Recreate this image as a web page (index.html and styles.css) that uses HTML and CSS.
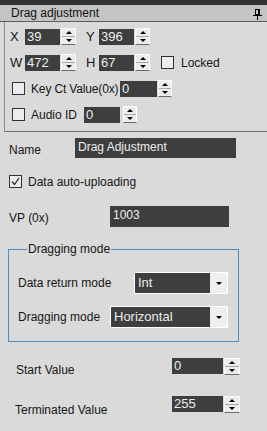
FILE: index.html
```html
<!DOCTYPE html>
<html lang="en">
<head>
    <meta charset="UTF-8">
    <meta name="viewport" content="width=device-width, initial-scale=1.0">
    <title>Drag adjustment</title>
    <link rel="stylesheet" href="styles.css">
</head>
<body>

<div class="topstrip"></div>

<div class="header">
    <span>Drag adjustment</span>
    <svg class="pin" width="9" height="11" viewBox="0 0 9 11">
        <rect x="2.5" y="0.5" width="4" height="5" fill="none" stroke="#000"/>
        <rect x="5" y="0" width="2" height="6" fill="#000"/>
        <line x1="0" y1="6.5" x2="9" y2="6.5" stroke="#000"/>
        <line x1="4.5" y1="7" x2="4.5" y2="11" stroke="#000"/>
    </svg>
</div>

<div class="props">
    <div class="row">
        <span class="lbl-xy">X</span>
        <span class="spin-input w35">39</span>
        <span class="spin-btn"><i class="up"></i><i class="down"></i></span>
        <span class="lbl-xy second">Y</span>
        <span class="spin-input w35">396</span>
        <span class="spin-btn"><i class="up"></i><i class="down"></i></span>
    </div>
    <div class="row">
        <span class="lbl-xy">W</span>
        <span class="spin-input w35">472</span>
        <span class="spin-btn"><i class="up"></i><i class="down"></i></span>
        <span class="lbl-xy second">H</span>
        <span class="spin-input w35">67</span>
        <span class="spin-btn"><i class="up"></i><i class="down"></i></span>
        <span class="check locked"></span>
        <span class="check-text">Locked</span>
    </div>
    <div class="row">
        <span class="check indent"></span>
        <span class="check-text keyct">Key Ct Value(0x)</span>
        <span class="spin-input w37">0</span>
        <span class="spin-btn narrow"><i class="up"></i><i class="down"></i></span>
    </div>
    <div class="row">
        <span class="check indent"></span>
        <span class="check-text audio">Audio ID</span>
        <span class="spin-input w36">0</span>
        <span class="spin-btn narrow gap3"><i class="up"></i><i class="down"></i></span>
    </div>
</div>

<div class="form">
    <div class="name-row">
        <span class="name-label">Name</span>
        <span class="text-box name-box">Drag Adjustment</span>
    </div>

    <div class="auto-row">
        <span class="check checked">
            <svg width="11" height="11" viewBox="0 0 11 11"><polyline points="2,5.5 4.5,8.5 9,2" fill="none" stroke="#222" stroke-width="1.2"/></svg>
        </span>
        <span class="check-text">Data auto-uploading</span>
    </div>

    <div class="vp-row">
        <span class="vp-label">VP (0x)</span>
        <span class="text-box vp-box">1003</span>
    </div>

    <fieldset class="group">
        <legend>Dragging mode</legend>
        <div class="group-row">
            <span class="ret-label">Data return mode</span>
            <span class="combo ret-combo"><span class="combo-value">Int</span><span class="combo-arrow"><i></i></span></span>
        </div>
        <div class="group-row">
            <span class="drag-label">Dragging mode</span>
            <span class="combo drag-combo"><span class="combo-value">Horizontal</span><span class="combo-arrow"><i></i></span></span>
        </div>
    </fieldset>

    <div class="value-row start">
        <span class="value-label">Start Value</span>
        <span class="spin-input w51">0</span>
        <span class="spin-btn wide"><i class="up"></i><i class="down"></i></span>
    </div>
    <div class="value-row end">
        <span class="value-label">Terminated Value</span>
        <span class="spin-input w51">255</span>
        <span class="spin-btn wide"><i class="up"></i><i class="down"></i></span>
    </div>
</div>

</body>
</html>
```

FILE: styles.css
```css
body {
    margin: 0;
    width: 267px;
    height: 431px;
    overflow: hidden;
    background-color: #dadada;
    color: #161616;
    font-family: "Liberation Sans", Arial, sans-serif;
    font-size: 12px;
}

.topstrip {
    height: 5px;
    background-color: #333333;
}

.header {
    display: flex;
    align-items: center;
    justify-content: space-between;
    height: 16px;
    padding: 0 5px 0 11px;
    background-color: #c4c4c4;
    border-bottom: 1px solid #5c5c5c;
    color: #111;
}

.pin {
    display: block;
    margin-top: 2px;
}

/* top property block */
.props {
    margin-left: 4px;
    border-left: 1px solid #8c8c8c;
    border-bottom: 1px solid #707070;
    padding: 6px 0 8px 5px;
    display: flex;
    flex-direction: column;
    gap: 9px;
}

.row {
    display: flex;
    align-items: center;
    height: 17px;
}

.lbl-xy {
    width: 15px;
    font-size: 13px;
}

.lbl-xy.second {
    width: 13px;
    margin-left: 10px;
}

.spin-input {
    box-sizing: border-box;
    height: 16px;
    padding-left: 2px;
    background-color: #3e3e3e;
    color: #eeeeee;
    font-size: 13px;
    line-height: 16px;
}

.w35 { width: 35px; }
.w36 { width: 36px; }
.w37 { width: 37px; }
.w51 { width: 51px; }

.spin-btn {
    box-sizing: border-box;
    display: flex;
    flex-direction: column;
    width: 15px;
    height: 17px;
    margin-left: 1px;
    background-color: #ececec;
    border: 1px solid #fbfbfb;
    border-bottom-color: #6a6a6a;
}

.spin-btn.narrow { width: 14px; }
.spin-btn.gap3 { margin-left: 3px; }
.spin-btn.wide { width: 16px; }

.spin-btn i {
    flex: 1;
    display: flex;
    align-items: center;
    justify-content: center;
}

.spin-btn .up {
    border-bottom: 1px solid #a8a8a8;
}

.spin-btn .up::after {
    content: "";
    border-left: 3px solid transparent;
    border-right: 3px solid transparent;
    border-bottom: 3px solid #000;
}

.spin-btn .down::after {
    content: "";
    border-left: 3px solid transparent;
    border-right: 3px solid transparent;
    border-top: 3px solid #000;
}

.check {
    box-sizing: border-box;
    display: flex;
    align-items: center;
    justify-content: center;
    width: 13px;
    height: 13px;
    border: 1px solid #333;
    background-color: #ededed;
}

.check.locked { margin-left: 11px; }
.check.indent { margin-left: 2px; }

.check-text {
    margin-left: 6px;
}

.locked + .check-text { margin-left: 7px; }

.keyct {
    width: 89px;
    letter-spacing: -0.15px;
}

.audio {
    width: 53px;
}

/* lower form */
.form {
    padding-left: 9px;
    display: flex;
    flex-direction: column;
}

.name-row {
    display: flex;
    align-items: center;
    margin-top: 6px;
    height: 20px;
}

.name-label {
    width: 66px;
    padding-top: 4px;
}

.text-box {
    box-sizing: border-box;
    background-color: #3e3e3e;
    color: #eeeeee;
    padding-left: 3px;
}

.name-box {
    width: 161px;
    height: 20px;
    line-height: 18px;
}

.auto-row {
    display: flex;
    align-items: center;
    margin-top: 17px;
    height: 13px;
}

.auto-row .check-text {
    margin-left: 6px;
}

.vp-row {
    display: flex;
    align-items: center;
    margin-top: 18px;
    height: 21px;
}

.vp-label {
    width: 101px;
    padding-top: 3px;
}

.vp-box {
    width: 119px;
    height: 21px;
    line-height: 19px;
}

.group {
    box-sizing: border-box;
    width: 231px;
    margin: 15px 0 0 -1px;
    padding: 16px 0 13px 9px;
    border: 1px solid #4b8ec3;
    display: flex;
    flex-direction: column;
    gap: 12px;
}

.group legend {
    margin-left: 9px;
    padding: 0 1px;
    line-height: 14px;
    font-size: 12px;
}

.group-row {
    display: flex;
    align-items: center;
    height: 22px;
}

.ret-label { width: 116px; }
.drag-label { width: 92px; }

.combo {
    box-sizing: border-box;
    display: flex;
    height: 22px;
    border: 1px solid #ffffff;
}

.ret-combo { width: 94px; }
.drag-combo { width: 118px; }

.combo-value {
    flex: 1;
    background-color: #3e3e3e;
    color: #eeeeee;
    padding-left: 3px;
    font-size: 13px;
    line-height: 20px;
}

.combo-arrow {
    width: 17px;
    display: flex;
    align-items: center;
    justify-content: center;
    background-color: #efefef;
}

.combo-arrow i {
    border-left: 3px solid transparent;
    border-right: 3px solid transparent;
    border-top: 3px solid #000;
}

.value-row {
    display: flex;
    align-items: flex-start;
    height: 17px;
}

.value-row.start { margin-top: 16px; }
.value-row.end { margin-top: 21px; }

.value-label {
    line-height: 14px;
}

.start .value-label {
    width: 156px;
    margin: 5px 0 0 7px;
}

.end .value-label {
    width: 157px;
    margin: 7px 0 0 6px;
}
```
